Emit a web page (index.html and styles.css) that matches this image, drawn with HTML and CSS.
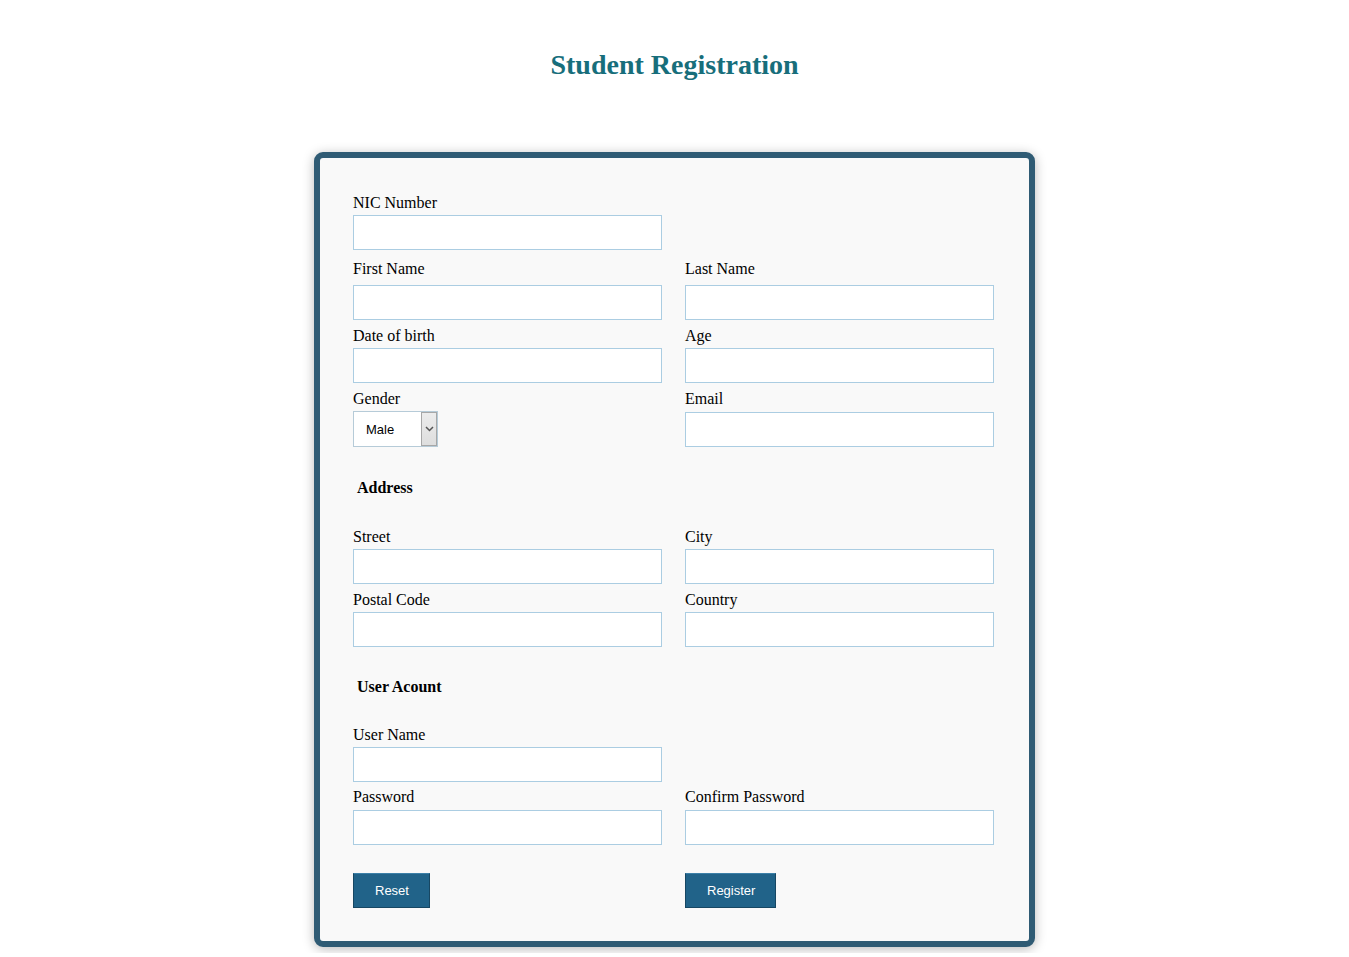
FILE: index.html
```html
<!DOCTYPE html>
<html lang="en">
<head>
<meta charset="utf-8">
<title>Student Registration</title>
<link rel="stylesheet" href="styles.css">
</head>
<body>
<div class="page">
  <h1 class="title">Student Registration</h1>
  <form class="card">
    <div class="row row-nic">
      <div class="field">
        <label class="lbl">NIC Number</label>
        <input class="inp" type="text">
      </div>
    </div>
    <div class="row row-name">
      <div class="field">
        <label class="lbl">First Name</label>
        <input class="inp inp-far" type="text">
      </div>
      <div class="field">
        <label class="lbl">Last Name</label>
        <input class="inp inp-far" type="text">
      </div>
    </div>
    <div class="row row-std">
      <div class="field">
        <label class="lbl">Date of birth</label>
        <input class="inp" type="text">
      </div>
      <div class="field">
        <label class="lbl">Age</label>
        <input class="inp" type="text">
      </div>
    </div>
    <div class="row row-std">
      <div class="field">
        <label class="lbl">Gender</label>
        <div class="select-wrap">
          <select class="sel"><option>Male</option><option>Female</option></select>
          <span class="sel-btn"><svg width="9" height="6" viewBox="0 0 9 6"><path d="M1 1 L4.5 4.5 L8 1" fill="none" stroke="#555" stroke-width="1.5"/></svg></span>
        </div>
      </div>
      <div class="field">
        <label class="lbl">Email</label>
        <input class="inp inp-email" type="text">
      </div>
    </div>

    <h2 class="section sec-address">Address</h2>
    <div class="row row-street">
      <div class="field">
        <label class="lbl">Street</label>
        <input class="inp" type="text">
      </div>
      <div class="field">
        <label class="lbl">City</label>
        <input class="inp" type="text">
      </div>
    </div>
    <div class="row row-std">
      <div class="field">
        <label class="lbl">Postal Code</label>
        <input class="inp" type="text">
      </div>
      <div class="field">
        <label class="lbl">Country</label>
        <input class="inp" type="text">
      </div>
    </div>

    <h2 class="section sec-user">User Acount</h2>
    <div class="row row-user">
      <div class="field">
        <label class="lbl">User Name</label>
        <input class="inp" type="text">
      </div>
    </div>
    <div class="row row-tight">
      <div class="field">
        <label class="lbl">Password</label>
        <input class="inp inp-mid" type="password">
      </div>
      <div class="field">
        <label class="lbl">Confirm Password</label>
        <input class="inp inp-mid" type="password">
      </div>
    </div>
    <div class="row row-buttons">
      <div class="field"><button class="btn" type="reset">Reset</button></div>
      <div class="field"><button class="btn" type="button">Register</button></div>
    </div>
  </form>
</div>
</body>
</html>
```
FILE: styles.css
```css
html, body {
  margin: 0;
  padding: 0;
  background: #ffffff;
}
body {
  font-family: "Liberation Serif", "Times New Roman", serif;
  color: #000;
}
.page {
  padding-top: 49px;
  padding-bottom: 6px;
  display: flex;
  flex-direction: column;
  align-items: center;
}
.title {
  margin: 0;
  font-size: 28px;
  line-height: 32px;
  font-weight: bold;
  color: #176e7b;
}
.card {
  margin: 71px 0 0;
  box-sizing: border-box;
  width: 721px;
  border: 6px solid #2f5b74;
  border-radius: 9px;
  background: #f9f9f9;
  box-shadow: 0 2px 12px rgba(0, 0, 0, 0.28);
  padding: 35px 30px 33px 33px;
}
.row {
  display: grid;
  grid-template-columns: 309px 309px;
  column-gap: 23px;
  margin-top: 6px;
}
.row-nic { margin-top: 0; }
.row-name { margin-top: 9px; }
.row-street { margin-top: 31px; }
.row-user { margin-top: 30px; }
.row-tight { margin-top: 5px; }
.row-buttons { margin-top: 28px; }
.field {
  display: flex;
  flex-direction: column;
  align-items: flex-start;
}
.lbl {
  display: block;
  font-size: 16px;
  line-height: 20px;
  height: 18px;
}
.inp {
  box-sizing: border-box;
  width: 309px;
  height: 35px;
  margin: 4px 0 0;
  border: 1px solid #abcde2;
  background: #fff;
  padding: 2px 6px;
  font-family: "Liberation Sans", Arial, sans-serif;
  font-size: 13px;
  outline: none;
}
.inp-far { margin-top: 8px; }
.inp-mid { margin-top: 5px; }
.inp-email { margin-top: 5px; }
.select-wrap {
  position: relative;
  margin-top: 4px;
  width: 85px;
  height: 36px;
}
.sel {
  -webkit-appearance: none;
  appearance: none;
  box-sizing: border-box;
  width: 85px;
  height: 36px;
  margin: 0;
  border: 1px solid #b6cbd8;
  border-radius: 0;
  background: #fff;
  padding: 0 0 0 12px;
  font-family: "Liberation Sans", Arial, sans-serif;
  font-size: 13px;
  color: #000;
  outline: none;
}
.sel-btn {
  position: absolute;
  top: 1px;
  right: 1px;
  width: 16px;
  height: 34px;
  box-sizing: border-box;
  border: 1px solid #a7a7a7;
  background: linear-gradient(#ececec, #dedede);
  display: flex;
  align-items: center;
  justify-content: center;
  pointer-events: none;
}
.section {
  margin: 0;
  font-size: 16px;
  line-height: 20px;
  height: 18px;
  font-weight: bold;
  padding-left: 4px;
}
.sec-address { margin-top: 31px; }
.sec-user { margin-top: 30px; }
.btn {
  box-sizing: border-box;
  height: 35px;
  padding: 0 20px 0 21px;
  margin: 0;
  background: #216389;
  color: #fff;
  border: 1px solid #174763;
  border-top-color: #3c80a8;
  border-radius: 0;
  font-family: "Liberation Sans", Arial, sans-serif;
  font-size: 13px;
  cursor: pointer;
}
```
